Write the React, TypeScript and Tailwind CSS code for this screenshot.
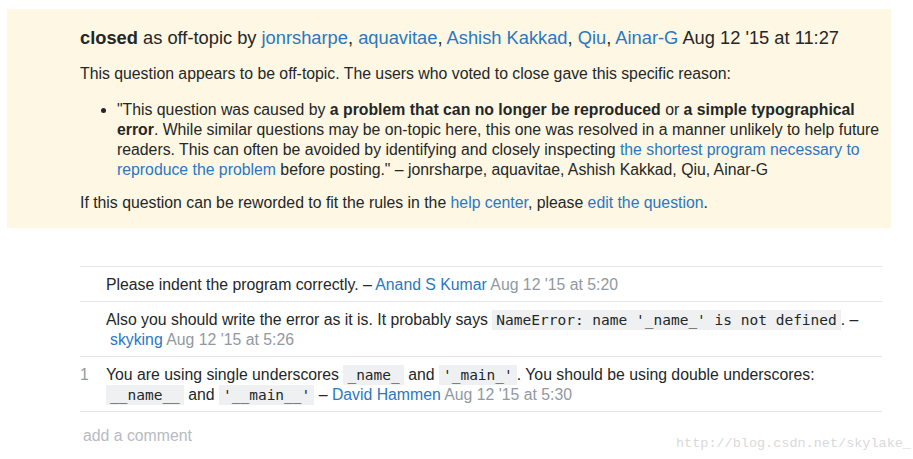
import React from "react";

const link = "text-[#2a78c2]";
const code =
  "bg-[#eff0f1] px-[4px] py-[2px] font-['DejaVu_Sans_Mono',monospace] text-[14.5px] text-[#242729]";

function Comment({
  votes,
  children,
}: {
  votes?: string;
  children: React.ReactNode;
}) {
  return (
    <div className="flex border-b border-[#e4e6e8] pt-[8px] pb-[6px]">
      <div className="w-[26px] shrink-0 text-[#9199a1]">{votes}</div>
      <div className="flex-1 pr-[10px] text-[#242729]">{children}</div>
    </div>
  );
}

export default function App() {
  return (
    <div className="relative h-[459px] w-[913px] overflow-hidden bg-white font-['Liberation_Sans',Arial,sans-serif]">
      <div className="ml-[7px] mt-[9px] h-[219px] w-[884px] bg-[#fdf7e3] pl-[73px] pr-[8px] pt-[17px] text-[15.8px] leading-[20px] text-[#242729]">
        <h2 className="text-[18.3px] leading-[24px]">
          <b>closed</b> as off-topic by <a className={link}>jonrsharpe</a>,{" "}
          <a className={link}>aquavitae</a>, <a className={link}>Ashish Kakkad</a>,{" "}
          <a className={link}>Qiu</a>, <a className={link}>Ainar-G</a> Aug 12 '15 at 11:27
        </h2>
        <p className="mt-[14px]">
          This question appears to be off-topic. The users who voted to close gave this
          specific reason:
        </p>
        <ul className="mt-[16px] list-disc pl-[37px]">
          <li>
            "This question was caused by <b>a problem that can no longer be reproduced</b> or{" "}
            <b>a simple typographical error</b>. While similar questions may be on-topic here,
            this one was resolved in a manner unlikely to help future readers. This can often be
            avoided by identifying and closely inspecting{" "}
            <a className={link}>the shortest program necessary to reproduce the problem</a>{" "}
            before posting." – jonrsharpe, aquavitae, Ashish Kakkad, Qiu, Ainar-G
          </li>
        </ul>
        <p className="mt-[13px]">
          If this question can be reworded to fit the rules in the{" "}
          <a className={link}>help center</a>, please <a className={link}>edit the question</a>.
        </p>
      </div>

      <div className="ml-[80px] mt-[38px] w-[802px] border-t border-[#e4e6e8] text-[15.8px] leading-[20px]">
        <Comment>
          Please indent the program correctly. – <a className={link}>Anand S Kumar</a>{" "}
          <span className="text-[#9199a1]">Aug 12 '15 at 5:20</span>
        </Comment>
        <Comment>
          Also you should write the error as it is. It probably says{" "}
          <code className={code}>NameError: name '_name_' is not defined</code>. –
          <br />
          <a className={`${link} ml-[4px]`}>skyking</a>{" "}
          <span className="text-[#9199a1]">Aug 12 '15 at 5:26</span>
        </Comment>
        <Comment votes="1">
          You are using single underscores <code className={code}>_name_</code> and{" "}
          <code className={code}>'_main_'</code>. You should be using double underscores:{" "}
          <code className={code}>__name__</code> and <code className={code}>'__main__'</code> –{" "}
          <a className={link}>David Hammen</a>{" "}
          <span className="text-[#9199a1]">Aug 12 '15 at 5:30</span>
        </Comment>
        <div className="pl-[3px] pt-[14px] text-[#b7bbbf]">add a comment</div>
      </div>

      <div className="absolute left-[676px] top-[434px] font-['Liberation_Mono',monospace] text-[13.5px] text-[#d9d9d9]">
        http://blog.csdn.net/skylake_
      </div>
    </div>
  );
}
